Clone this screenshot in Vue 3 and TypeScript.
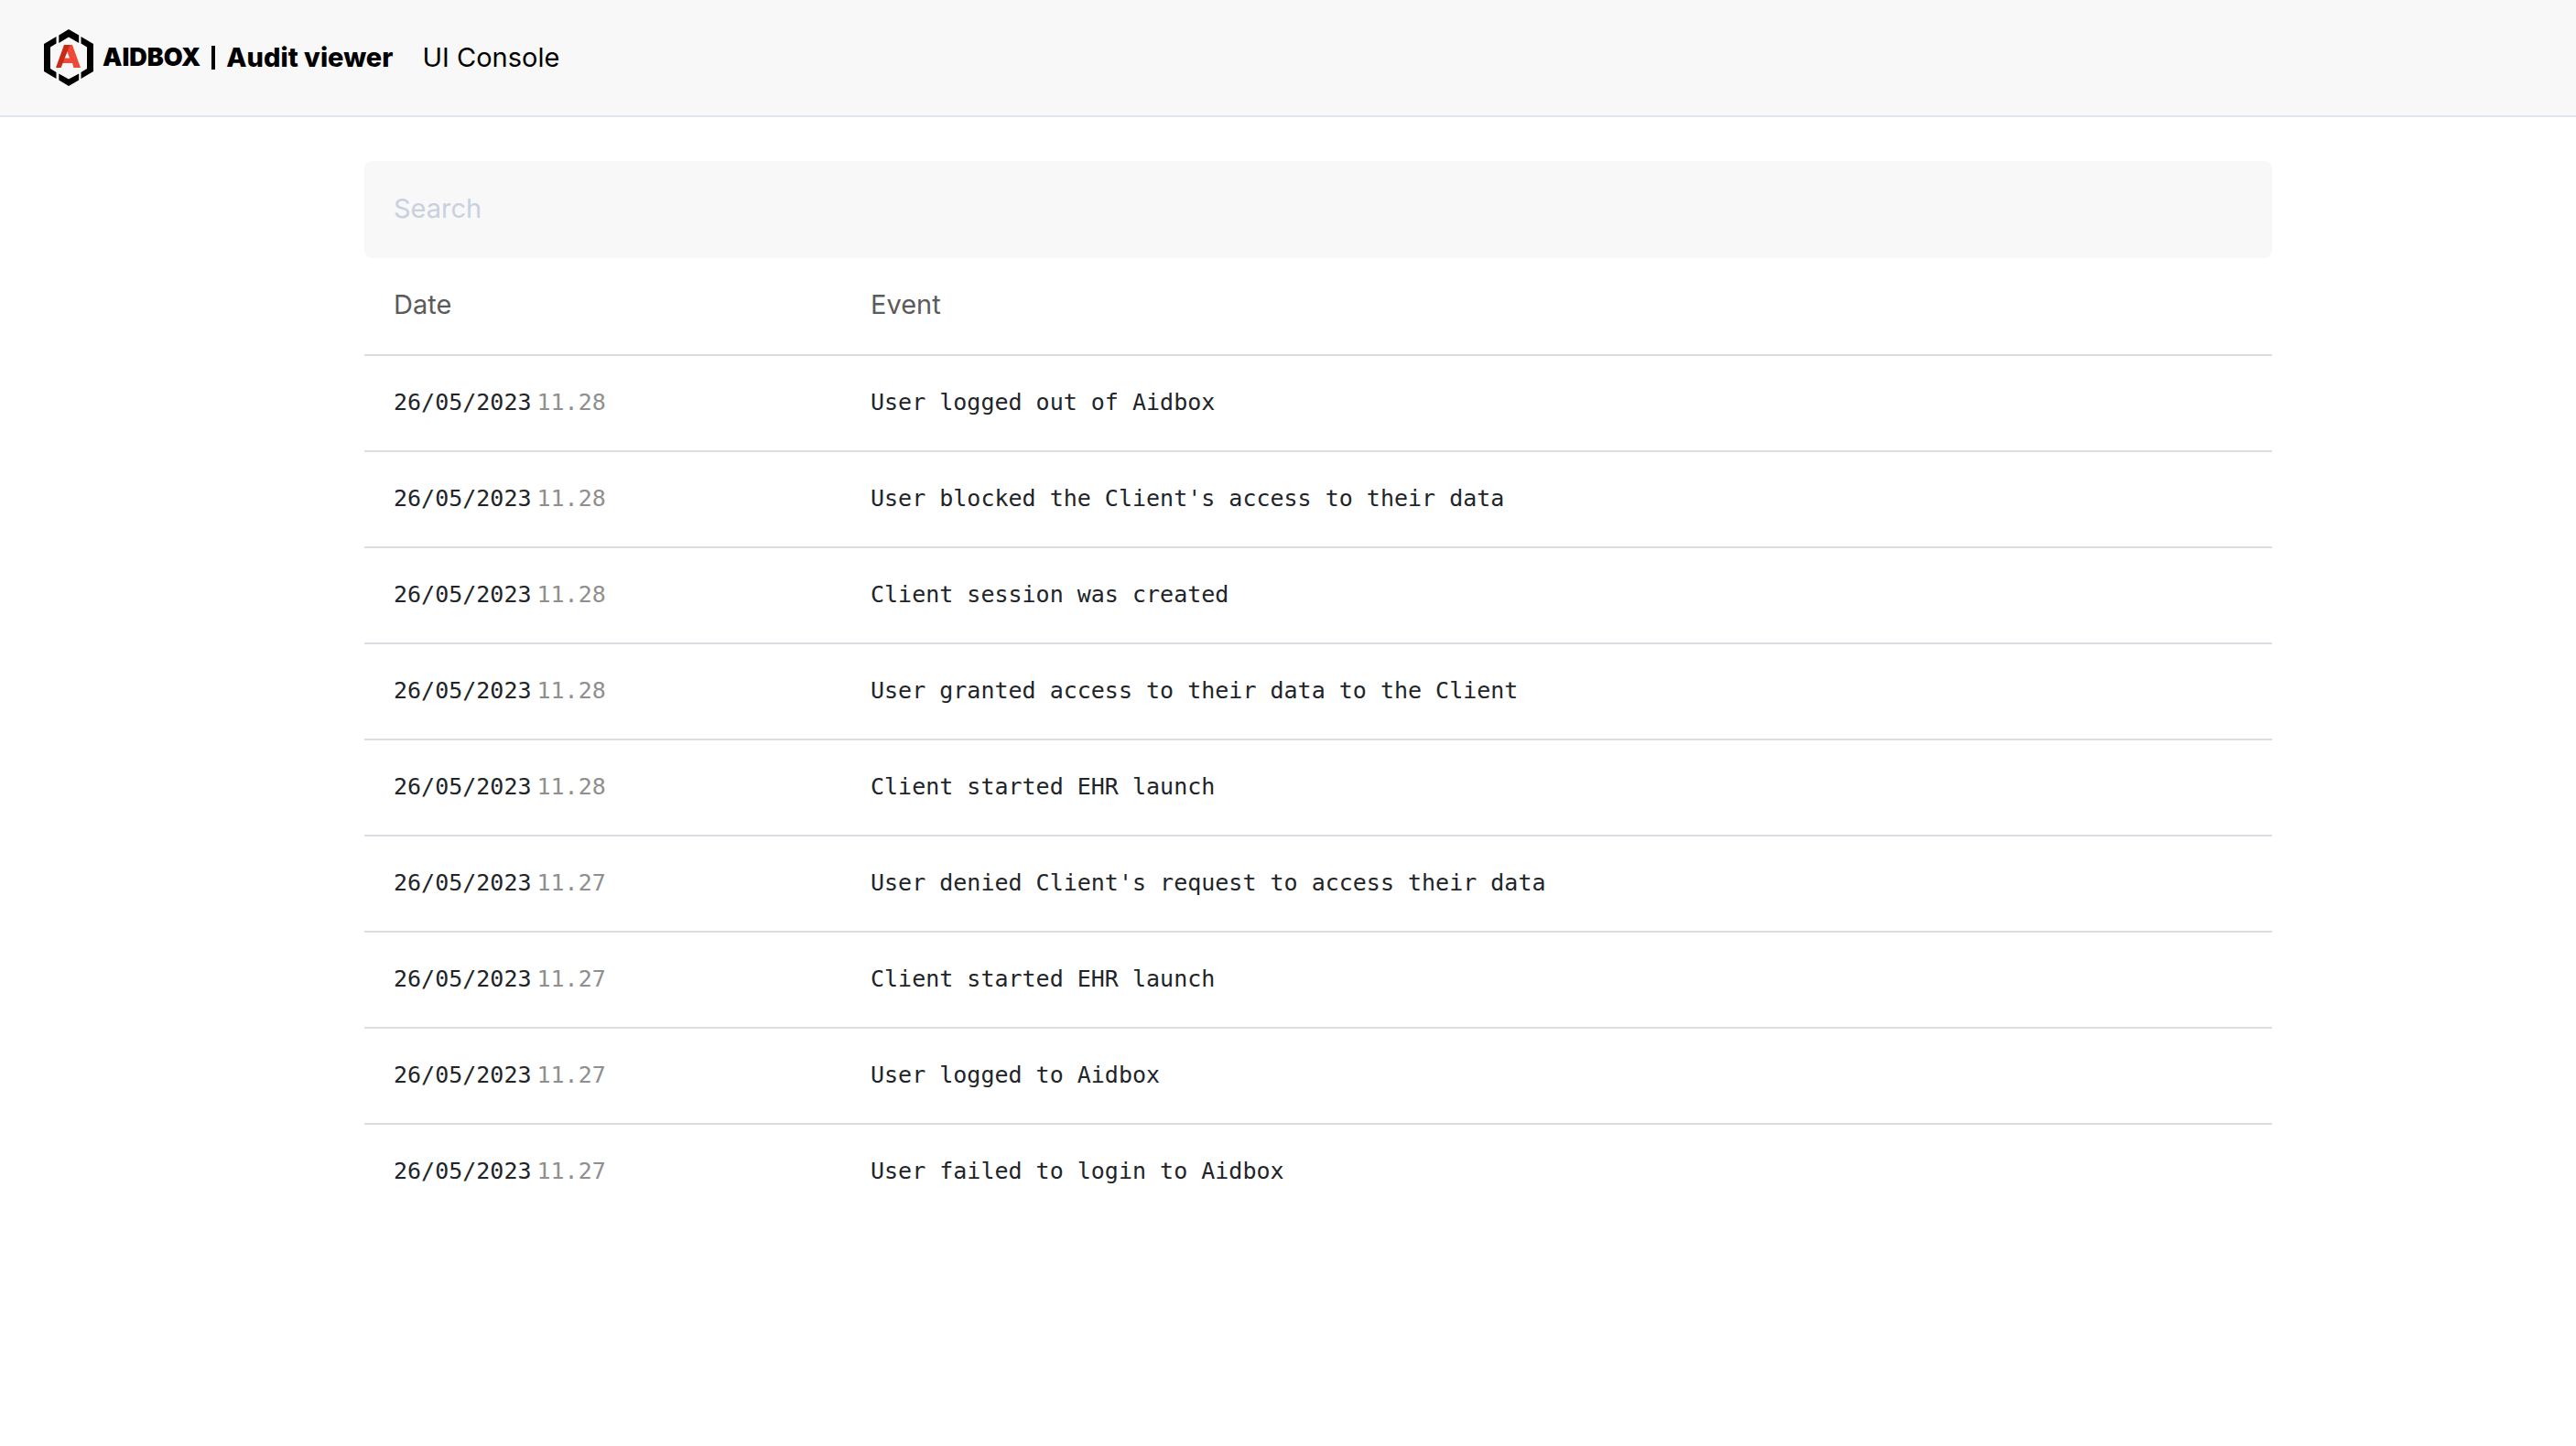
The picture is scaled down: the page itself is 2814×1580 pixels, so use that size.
<script setup lang="ts">
import { computed, ref } from 'vue'

interface AuditEvent {
  date: string
  time: string
  text: string
}

const day = '26/05/2023'

const events: AuditEvent[] = [
  { date: day, time: '11.28', text: 'User logged out of Aidbox' },
  { date: day, time: '11.28', text: "User blocked the Client's access to their data" },
  { date: day, time: '11.28', text: 'Client session was created' },
  { date: day, time: '11.28', text: 'User granted access to their data to the Client' },
  { date: day, time: '11.28', text: 'Client started EHR launch' },
  { date: day, time: '11.27', text: "User denied Client's request to access their data" },
  { date: day, time: '11.27', text: 'Client started EHR launch' },
  { date: day, time: '11.27', text: 'User logged to Aidbox' },
  { date: day, time: '11.27', text: 'User failed to login to Aidbox' },
]

const query = ref('')

const visibleEvents = computed(() =>
  events.filter((e) => e.text.toLowerCase().includes(query.value.trim().toLowerCase())),
)
</script>

<template>
  <header class="topbar">
    <a class="brand" href="#">
      <svg class="logo" viewBox="0 0 54 62" aria-hidden="true">
        <g fill="#000">
          <path d="M16.300 6.500 27 0 38.200 6.500V15L27 8.500 16.300 15Z" />
          <path d="M16.300 55.500 27 62 38.200 55.500V48.500L27 54.500 16.300 48.500Z" />
          <path d="M13.500 8V15.500L7 19.500V43L13.500 47V54L0 46V16Z" />
          <path d="M40.500 8V15.500L47 19.500V43L40.500 47V54L54 46V16Z" />
        </g>
        <path fill="#ef4a38" d="M22 17H31L40 42H32.500L31 37H19.500L21.500 31.500H28L25.500 24.500Z" />
        <path fill="#c92a16" d="M22 17H28.500L20 38.500 18.500 42H13Z" />
      </svg>
      <span class="wordmark">AIDBOX</span>
      <span class="divider"></span>
      <span class="product">Audit viewer</span>
    </a>
    <nav>
      <a class="nav-link" href="#">UI Console</a>
    </nav>
  </header>

  <main class="content">
    <input v-model="query" class="search" type="search" placeholder="Search" aria-label="Search" />
    <table class="events">
      <thead>
        <tr>
          <th class="date-col" scope="col">Date</th>
          <th scope="col">Event</th>
        </tr>
      </thead>
      <tbody>
        <tr v-for="(event, index) in visibleEvents" :key="index">
          <td><span class="date">{{ event.date }}</span><span class="time">{{ event.time }}</span></td>
          <td>{{ event.text }}</td>
        </tr>
      </tbody>
    </table>
  </main>
</template>

<style>
body {
  background: #fff;
  font-family: Inter, sans-serif;
  font-size: 29px;
  line-height: 40px;
}
</style>

<style scoped>
.topbar {
  display: flex;
  align-items: center;
  gap: 32px;
  height: 126px;
  padding: 0 48px;
  background: #f8f8f8;
  border-bottom: 2px solid #e0e5f0;
}

.brand {
  display: flex;
  align-items: center;
  color: #000;
  text-decoration: none;
}

.logo {
  width: 54px;
  height: 62px;
  margin-right: 10px;
}

.wordmark {
  font-size: 27px;
  font-weight: 900;
}

.divider {
  width: 4px;
  height: 26px;
  margin: 0 12px;
  background: #000;
}

.product {
  font-weight: 800;
}

.nav-link {
  color: #000;
  text-decoration: none;
}

.content {
  padding: 48px 332px 48px 398px;
}

.search {
  display: block;
  box-sizing: border-box;
  width: 100%;
  height: 106px;
  padding: 0 32px 4px;
  border: 0;
  border-radius: 8px;
  outline: 0;
  background: #f8f8f8;
  color: #212529;
  font: inherit;
  appearance: none;
}

.search::placeholder {
  color: #c9d0df;
  opacity: 1;
}

.events {
  width: 100%;
  border-collapse: separate;
  border-spacing: 0;
  table-layout: fixed;
}

.date-col {
  width: 25%;
}

th,
td {
  box-sizing: border-box;
  height: 105px;
  padding: 0 32px 2px;
  border-bottom: 2px solid #dcdce2;
  text-align: left;
}

th {
  height: 107px;
  padding-bottom: 4px;
  color: #5b5b5b;
  font-weight: 400;
}

td {
  color: #212529;
  font-family: "DejaVu Sans Mono", monospace;
  font-size: 25px;
}

tbody tr:last-child td {
  border-bottom-color: transparent;
}

.time {
  margin-left: 6px;
  color: #8f8f8f;
}
</style>
